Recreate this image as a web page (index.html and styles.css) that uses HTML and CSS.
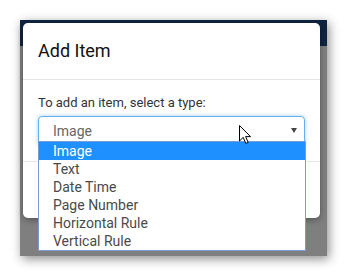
FILE: index.html
```html
<!DOCTYPE html>
<html lang="en">

<head>
    <meta charset="UTF-8">
    <title>Add Item</title>
    <link rel="stylesheet" href="styles.css">
</head>

<body>
    <div class="frame">
        <div class="topbar"></div>

        <div class="modal">
            <div class="modal-header">
                <h4 class="modal-title">Add Item</h4>
            </div>
            <div class="modal-body">
                <label class="field-label">To add an item, select a type:</label>
                <div class="select">
                    <span class="select-value">Image</span>
                    <span class="select-arrow"></span>
                </div>
            </div>
            <div class="modal-footer"></div>
        </div>

        <ul class="dropdown">
            <li class="active">Image</li>
            <li>Text</li>
            <li>Date Time</li>
            <li>Page Number</li>
            <li>Horizontal Rule</li>
            <li>Vertical Rule</li>
        </ul>

        <svg class="cursor" width="13" height="20" viewBox="0 0 13 20">
            <path d="M0.5 0.5 L0.5 16 L4.2 12.4 L6.8 18.4 L9.2 17.4 L6.6 11.6 L11.5 11.6 Z" fill="#fff" stroke="#000" stroke-width="1" stroke-linejoin="miter" />
        </svg>
    </div>
</body>

</html>
```

FILE: styles.css
```css
* {
    margin: 0;
    padding: 0;
    box-sizing: border-box;
    font-family: Roboto, 'Noto Sans', sans-serif;
}

body {
    background: #fff;
    width: 347px;
    height: 277px;
    overflow: hidden;
}

.frame {
    position: relative;
    margin: 20px 0 0 20px;
    width: 307px;
    height: 236px;
    background: #7f7f7f;
    box-shadow: 2px 3px 10px rgba(0, 0, 0, 0.45);
}

.topbar {
    height: 26px;
    background: #0f2440;
}

.modal {
    position: absolute;
    left: 3px;
    top: 3px;
    width: 297px;
    height: 195px;
    background: #fff;
    border-radius: 5px;
    box-shadow: 0 2px 6px rgba(0, 0, 0, 0.35);
    display: flex;
    flex-direction: column;
}

.modal-header {
    padding: 15px;
    border-bottom: 1px solid #e5e5e5;
}

.modal-title {
    font-size: 18px;
    font-weight: 400;
    line-height: 1.42857;
    color: #111;
}

.modal-body {
    padding: 14px 15px 15px;
}

.field-label {
    display: block;
    font-size: 13px;
    line-height: 18px;
    color: #333;
    margin-bottom: 4px;
}

.select {
    height: 30px;
    border: 1px solid #66afe9;
    border-radius: 4px;
    box-shadow: 0 0 4px rgba(102, 175, 233, 0.6);
    display: flex;
    align-items: center;
    justify-content: space-between;
    padding: 0 7px 0 14px;
}

.select-value {
    font-size: 14px;
    color: #666;
}

.select-arrow {
    width: 0;
    height: 0;
    border-left: 3px solid transparent;
    border-right: 3px solid transparent;
    border-top: 5px solid #444;
}

.modal-footer {
    flex: 1;
    border-top: 1px solid #e5e5e5;
}

.dropdown {
    position: absolute;
    left: 18px;
    top: 121px;
    width: 268px;
    list-style: none;
    background: #fff;
    border: 1px solid #7a9cd6;
}

.dropdown li {
    height: 18px;
    line-height: 18px;
    padding-left: 14px;
    font-size: 14px;
    color: #4a4a4a;
}

.dropdown li.active {
    background: #1e90ff;
    color: #fff;
}

.cursor {
    position: absolute;
    left: 219px;
    top: 105px;
}
```
